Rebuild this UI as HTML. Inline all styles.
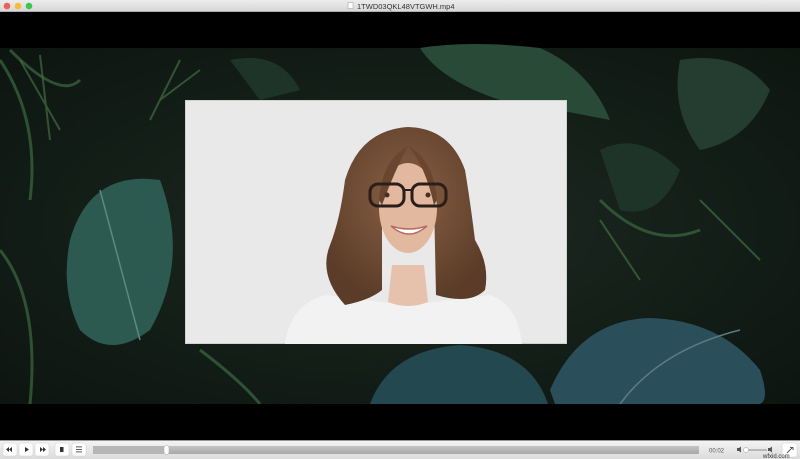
<!DOCTYPE html>
<html><head><meta charset="utf-8"><style>
html,body{margin:0;padding:0;width:800px;height:459px;overflow:hidden;background:#000;font-family:"Liberation Sans",sans-serif}
</style></head><body>
<svg width="800" height="459" viewBox="0 0 800 459" xmlns="http://www.w3.org/2000/svg">
<defs>
<linearGradient id="tb" x1="0" y1="0" x2="0" y2="1"><stop offset="0" stop-color="#ececec"/><stop offset="1" stop-color="#d6d6d6"/></linearGradient>
<linearGradient id="cb" x1="0" y1="0" x2="0" y2="1"><stop offset="0" stop-color="#f4f4f4"/><stop offset="1" stop-color="#dcdcdc"/></linearGradient>
<radialGradient id="bg" cx="0.5" cy="0.5" r="0.7"><stop offset="0" stop-color="#1c2a22"/><stop offset="1" stop-color="#0d1510"/></radialGradient>
<linearGradient id="pr" x1="0" y1="0" x2="0" y2="1"><stop offset="0" stop-color="#c4c4c4"/><stop offset="1" stop-color="#a8a8a8"/></linearGradient>
<radialGradient id="hair" cx="0.5" cy="0.4" r="0.6"><stop offset="0" stop-color="#8a6044"/><stop offset="1" stop-color="#5a3c28"/></radialGradient>
</defs>
<rect x="0" y="0" width="800" height="12" fill="url(#tb)"/>
<line x1="0" y1="11.5" x2="800" y2="11.5" stroke="#b0b0b0"/>
<circle cx="7" cy="6" r="3.3" fill="#ee5f57"/><circle cx="18" cy="6" r="3.3" fill="#f6bd3b"/><circle cx="29" cy="6" r="3.3" fill="#3fc64a"/>
<rect x="348" y="2.5" width="5" height="6" fill="#fff" stroke="#999" stroke-width="0.5"/>
<text x="357" y="8.8" font-size="7.5" fill="#333">1TWD03QKL48VTGWH.mp4</text>
<rect x="0" y="12" width="800" height="36" fill="#000"/>
<rect x="0" y="48" width="800" height="356" fill="url(#bg)"/>
<path d="M70 240 Q90 170 160 180 Q190 260 150 330 Q110 360 80 330 Q60 290 70 240Z" fill="#2d5a50"/>
<path d="M100 190 L140 340" stroke="#5a8a80" stroke-width="1.5"/>
<path d="M420 48 Q470 40 540 48 Q590 70 610 120 Q560 110 500 100 Q440 80 420 48Z" fill="#2a4a38"/>
<path d="M550 390 Q580 320 650 318 Q720 320 760 370 Q770 400 760 404 L555 404Z" fill="#2a4e5a"/>
<path d="M620 404 Q660 350 740 330" stroke="#5b7a85" stroke-width="1.5" fill="none"/>
<path d="M370 404 Q390 350 460 345 Q530 350 548 404Z" fill="#23484f"/>
<path d="M680 60 Q740 50 770 90 Q750 140 700 150 Q670 110 680 60Z" fill="#253d30"/>
<path d="M600 150 Q640 130 680 170 Q660 220 620 210Z" fill="#1f3428"/>
<path d="M230 60 Q280 50 300 90 L260 100Z" fill="#1f3428"/>
<path d="M0 60 Q40 120 30 200 M10 50 Q60 100 80 80 M0 250 Q40 300 30 404 M200 350 Q240 380 260 404 M600 200 Q650 250 700 230" stroke="#3a6a40" stroke-width="3" fill="none" opacity="0.7"/>
<path d="M20 60 L60 130 M40 55 L50 140 M180 60 L150 120 M200 70 L160 100 M600 220 L640 280 M700 200 L760 260" stroke="#4a7a4a" stroke-width="2" opacity="0.6"/>
<rect x="185" y="100" width="382" height="244" fill="#e9e9ea"/>
<rect x="185.5" y="100.5" width="381" height="243" fill="none" stroke="#cfd3d0"/>
<path d="M285 344 Q290 305 325 295 Q365 300 408 305 Q450 300 490 295 Q518 305 522 344Z" fill="#f2f2f2"/>
<path d="M392 265 L424 265 L428 302 Q408 310 388 302Z" fill="#e6c2ad"/>
<path d="M408 127 Q360 130 345 180 Q340 220 330 245 Q318 275 345 305 Q370 300 382 290 L382 200 Q408 160 434 200 L436 295 Q470 305 485 290 Q490 265 475 240 Q470 200 465 170 Q450 128 408 127Z" fill="url(#hair)"/>
<ellipse cx="408" cy="208" rx="29" ry="45" fill="#e2b89e"/>
<path d="M379 200 Q382 160 408 146 Q395 170 382 205Z M437 200 Q434 160 408 146 Q425 165 434 205Z" fill="#6a4530"/>
<rect x="370" y="184" width="34" height="22" rx="8" fill="none" stroke="#2a1e1a" stroke-width="3"/>
<rect x="412" y="184" width="34" height="22" rx="8" fill="none" stroke="#2a1e1a" stroke-width="3"/>
<line x1="404" y1="190" x2="412" y2="190" stroke="#2a1e1a" stroke-width="2"/>
<circle cx="387" cy="195" r="2.5" fill="#4a3020"/><circle cx="428" cy="195" r="2.5" fill="#4a3020"/>
<path d="M391 226 Q409 242 427 226 Q409 232 391 226Z" fill="#fff" stroke="#b86a62" stroke-width="1.5"/>
<rect x="0" y="404" width="800" height="36" fill="#000"/>
<rect x="0" y="440" width="800" height="19" fill="url(#cb)"/>
<line x1="0" y1="440.5" x2="800" y2="440.5" stroke="#999"/>
<g fill="#fff" stroke="#ccc" stroke-width="0.5">
<rect x="3" y="443" width="14" height="13" rx="2"/><rect x="19" y="443" width="14" height="13" rx="2"/><rect x="35" y="443" width="14" height="13" rx="2"/>
<rect x="55" y="443" width="14" height="13" rx="2"/><rect x="72" y="443" width="14" height="13" rx="2"/>
<rect x="782" y="443" width="15" height="14" rx="2"/>
</g>
<g fill="#333">
<path d="M9 447 L6 449.5 L9 452Z M12 447 L9 449.5 L12 452Z"/>
<path d="M25 447 L29 449.5 L25 452Z"/>
<path d="M40 447 L43 449.5 L40 452Z M43 447 L46 449.5 L43 452Z"/>
<rect x="60" y="447" width="3.5" height="5"/>
<rect x="76" y="446.5" width="6" height="0.8"/><rect x="76" y="449" width="6" height="0.8"/><rect x="76" y="451.5" width="6" height="0.8"/>
<path d="M787 453 L792 448 M790 447.5 L793 447.5 L793 450" stroke="#333" stroke-width="0.8" fill="none"/>
</g>
<rect x="93" y="446" width="606" height="8" rx="1" fill="url(#pr)"/>
<rect x="93" y="446" width="74" height="8" fill="#b6b6b6"/>
<rect x="164" y="445.5" width="5" height="9" rx="2.5" fill="#fff" stroke="#aaa" stroke-width="0.5"/>
<text x="709" y="452.5" font-size="6" fill="#555">00:02</text>
<path d="M737 448 L739 448 L741 446.5 L741 452.5 L739 451 L737 451Z" fill="#555"/>
<line x1="744" y1="450" x2="767" y2="450" stroke="#888" stroke-width="1"/>
<circle cx="746" cy="450" r="2.5" fill="#fff" stroke="#999" stroke-width="0.5"/>
<path d="M768 448 L770 448 L772 446.5 L772 452.5 L770 451 L768 451Z" fill="#555"/>
<text x="763" y="458" font-size="6" fill="#333">wfxid.com</text>
</svg>
</body></html>
